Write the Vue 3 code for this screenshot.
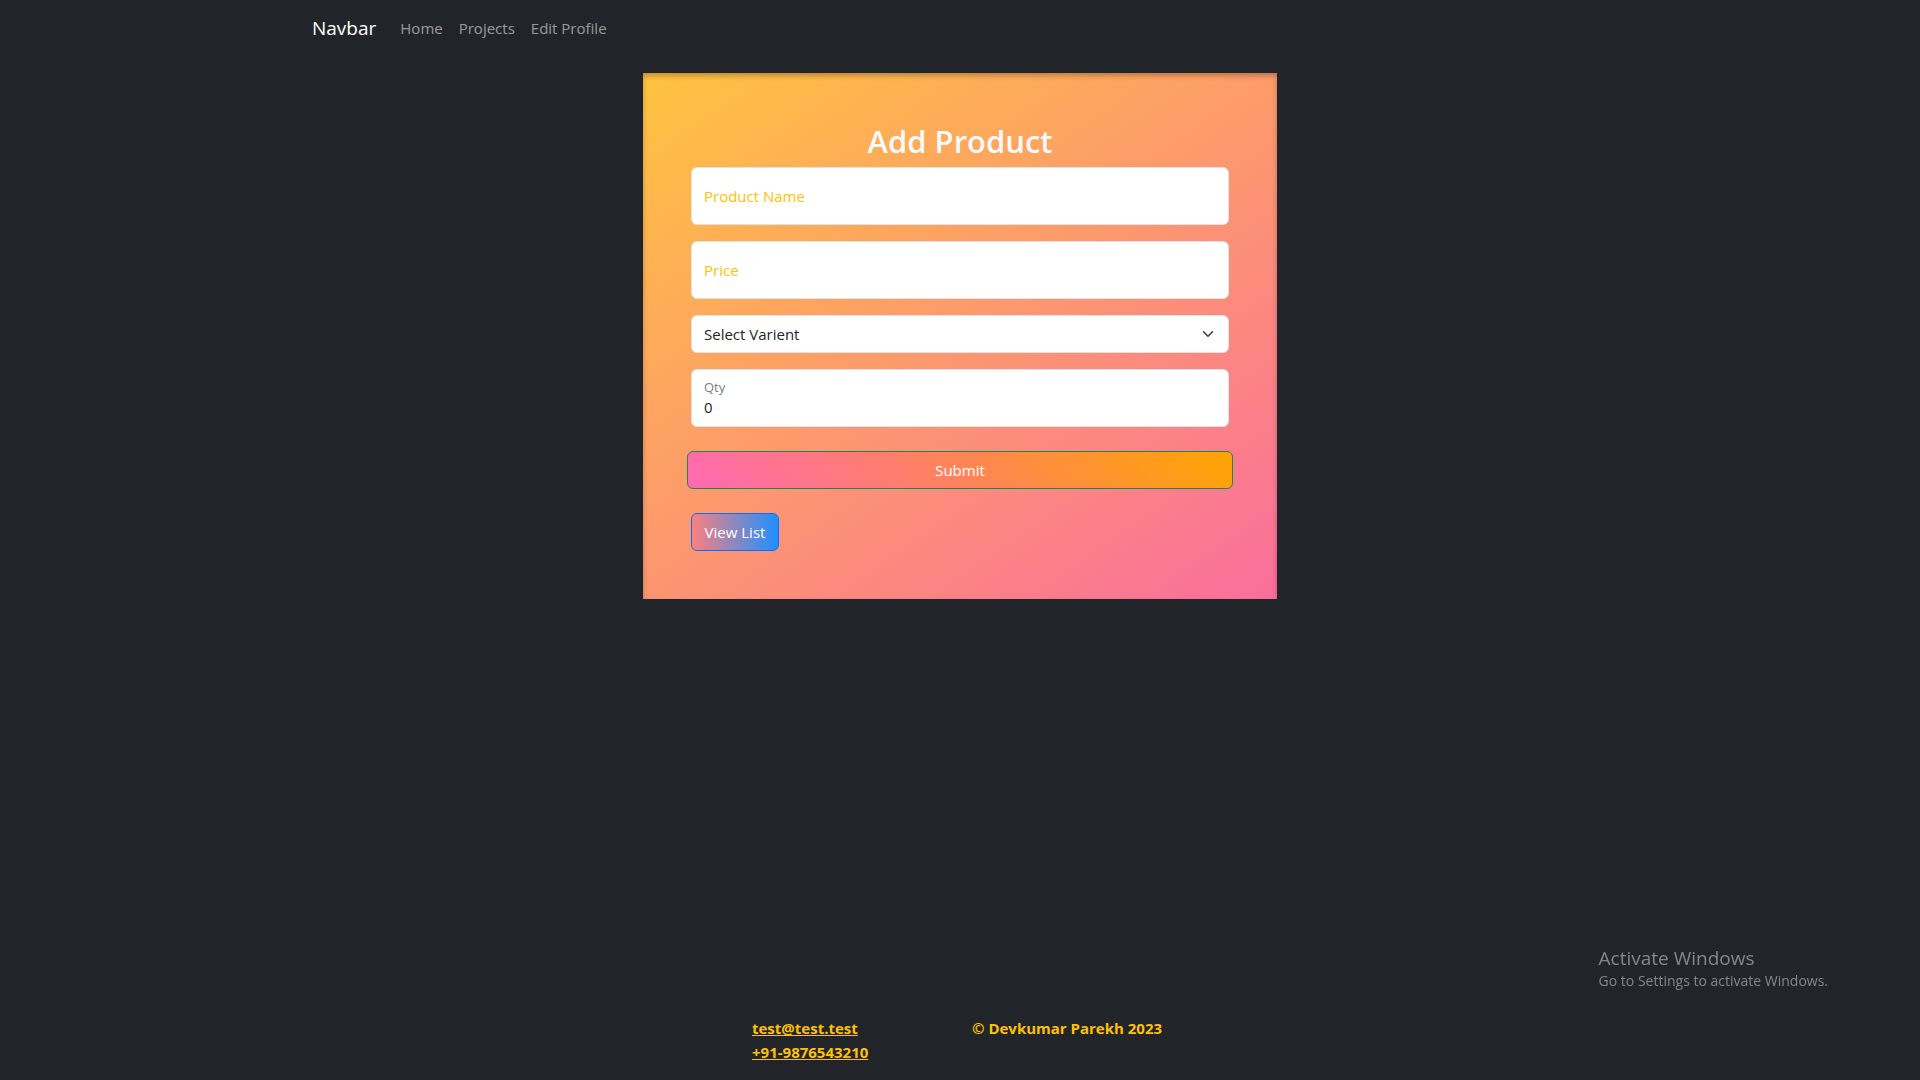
<script setup>
import { ref } from 'vue'

const links = ['Home', 'Projects', 'Edit Profile']
const name = ref('')
const price = ref('')
const variant = ref('')
const qty = ref('0')
</script>

<template>
  <div class="page">
    <nav class="navbar">
      <div class="container">
        <a class="brand" href="#">Navbar</a>
        <a v-for="link in links" :key="link" class="nav-link" href="#">{{ link }}</a>
      </div>
    </nav>

    <main class="card">
      <h1>Add Product</h1>
      <form @submit.prevent>
        <div class="field">
          <input id="name" v-model="name" class="control" type="text" placeholder=" " />
          <label class="accent" for="name">Product Name</label>
        </div>
        <div class="field">
          <input id="price" v-model="price" class="control" type="text" placeholder=" " />
          <label class="accent" for="price">Price</label>
        </div>
        <div class="field">
          <select v-model="variant" class="select" aria-label="Select Varient">
            <option value="">Select Varient</option>
          </select>
          <svg class="chevron" viewBox="0 0 16 16" aria-hidden="true">
            <path d="m2 5 6 6 6-6" />
          </svg>
        </div>
        <div class="field">
          <input id="qty" v-model="qty" class="control" type="text" placeholder=" " />
          <label for="qty">Qty</label>
        </div>
        <button class="btn submit" type="submit">Submit</button>
      </form>
      <button class="btn view" type="button">View List</button>
    </main>

    <footer class="footer">
      <div class="contact">
        <a href="mailto:test@test.test">test@test.test</a>
        <a href="tel:+91-9876543210">+91-9876543210</a>
      </div>
      <div>© Devkumar Parekh 2023</div>
    </footer>

    <aside class="activation">
      <div class="activation-title">Activate Windows</div>
      <div>Go to Settings to activate Windows.</div>
    </aside>
  </div>
</template>

<style>
body {
  margin: 0;
  background: #212529;
}
</style>

<style scoped>
.page,
.page * {
  box-sizing: border-box;
}
.page {
  min-height: 100vh;
  display: flex;
  flex-direction: column;
  background: #212529;
  color: #fff;
  font: 15px/24px "Segoe UI", "Open Sans", "Noto Sans", sans-serif;
}
.container {
  max-width: 1320px;
  margin: 0 auto;
  padding: 0 12px;
  height: 56px;
  display: flex;
  align-items: center;
}
.brand {
  margin-right: 16px;
  font-size: 19px;
  line-height: 30px;
  color: #fff;
  text-decoration: none;
}
.nav-link {
  padding: 8px;
  color: rgba(255, 255, 255, 0.55);
  text-decoration: none;
}
.card {
  width: round(33%, 2px);
  min-width: 320px;
  margin: 17px auto 48px;
  padding: 48px;
  background: linear-gradient(145deg, #ffc33f, #fa6e9c);
  box-shadow: inset 0 3px 5px rgba(0, 0, 0, 0.25);
}
h1 {
  margin: 0 0 6px;
  font-size: 31px;
  line-height: 40px;
  font-weight: 600;
  text-align: center;
  color: #f8f9fa;
}
.field {
  position: relative;
  margin-bottom: 16px;
}
.control,
.select {
  display: block;
  width: 100%;
  margin: 0;
  border: 1px solid #dee2e6;
  border-radius: 6px;
  background: #fff;
  color: #212529;
  font: inherit;
}
.control {
  height: 58px;
  padding: 26px 12px 8px;
}
.select {
  height: 38px;
  padding: 6px 36px 6px 12px;
  appearance: none;
}
.chevron {
  position: absolute;
  top: 13px;
  right: 15px;
  width: 12px;
  height: 12px;
  fill: none;
  stroke: #343a40;
  stroke-width: 2;
  stroke-linecap: round;
  stroke-linejoin: round;
  pointer-events: none;
}
label {
  position: absolute;
  top: 6px;
  left: 13px;
  font-size: 13px;
  color: #7a7d7f;
  pointer-events: none;
}
.control:placeholder-shown + label {
  top: 17px;
  font-size: 15px;
}
label.accent {
  color: #ffc107;
}
.btn {
  display: block;
  height: 38px;
  padding: 6px 12px;
  border: 1px solid;
  border-radius: 6px;
  color: #fff;
  font: inherit;
  cursor: pointer;
}
.submit {
  width: calc(100% + 8px);
  margin: 24px -4px;
  border-color: #198754;
  background: linear-gradient(45deg, #ff69b4, #ff8458 50%, #ffa500);
}
.view {
  min-width: 88px;
  border-color: #0d6efd;
  background: linear-gradient(to right, #fa8080, #1e90ff);
}
.footer {
  margin-top: auto;
  padding-bottom: 16px;
  display: grid;
  grid-template-columns: 220px 196px;
  justify-content: center;
  color: #ffc107;
  font-weight: 700;
}
.contact {
  display: flex;
  flex-direction: column;
  align-items: flex-start;
}
.contact a {
  color: inherit;
}
.activation {
  position: fixed;
  right: 92px;
  bottom: 89px;
  font-size: 14px;
  line-height: 20px;
  color: #84878a;
  pointer-events: none;
}
.activation-title {
  font-size: 19px;
  line-height: 26px;
}
</style>
